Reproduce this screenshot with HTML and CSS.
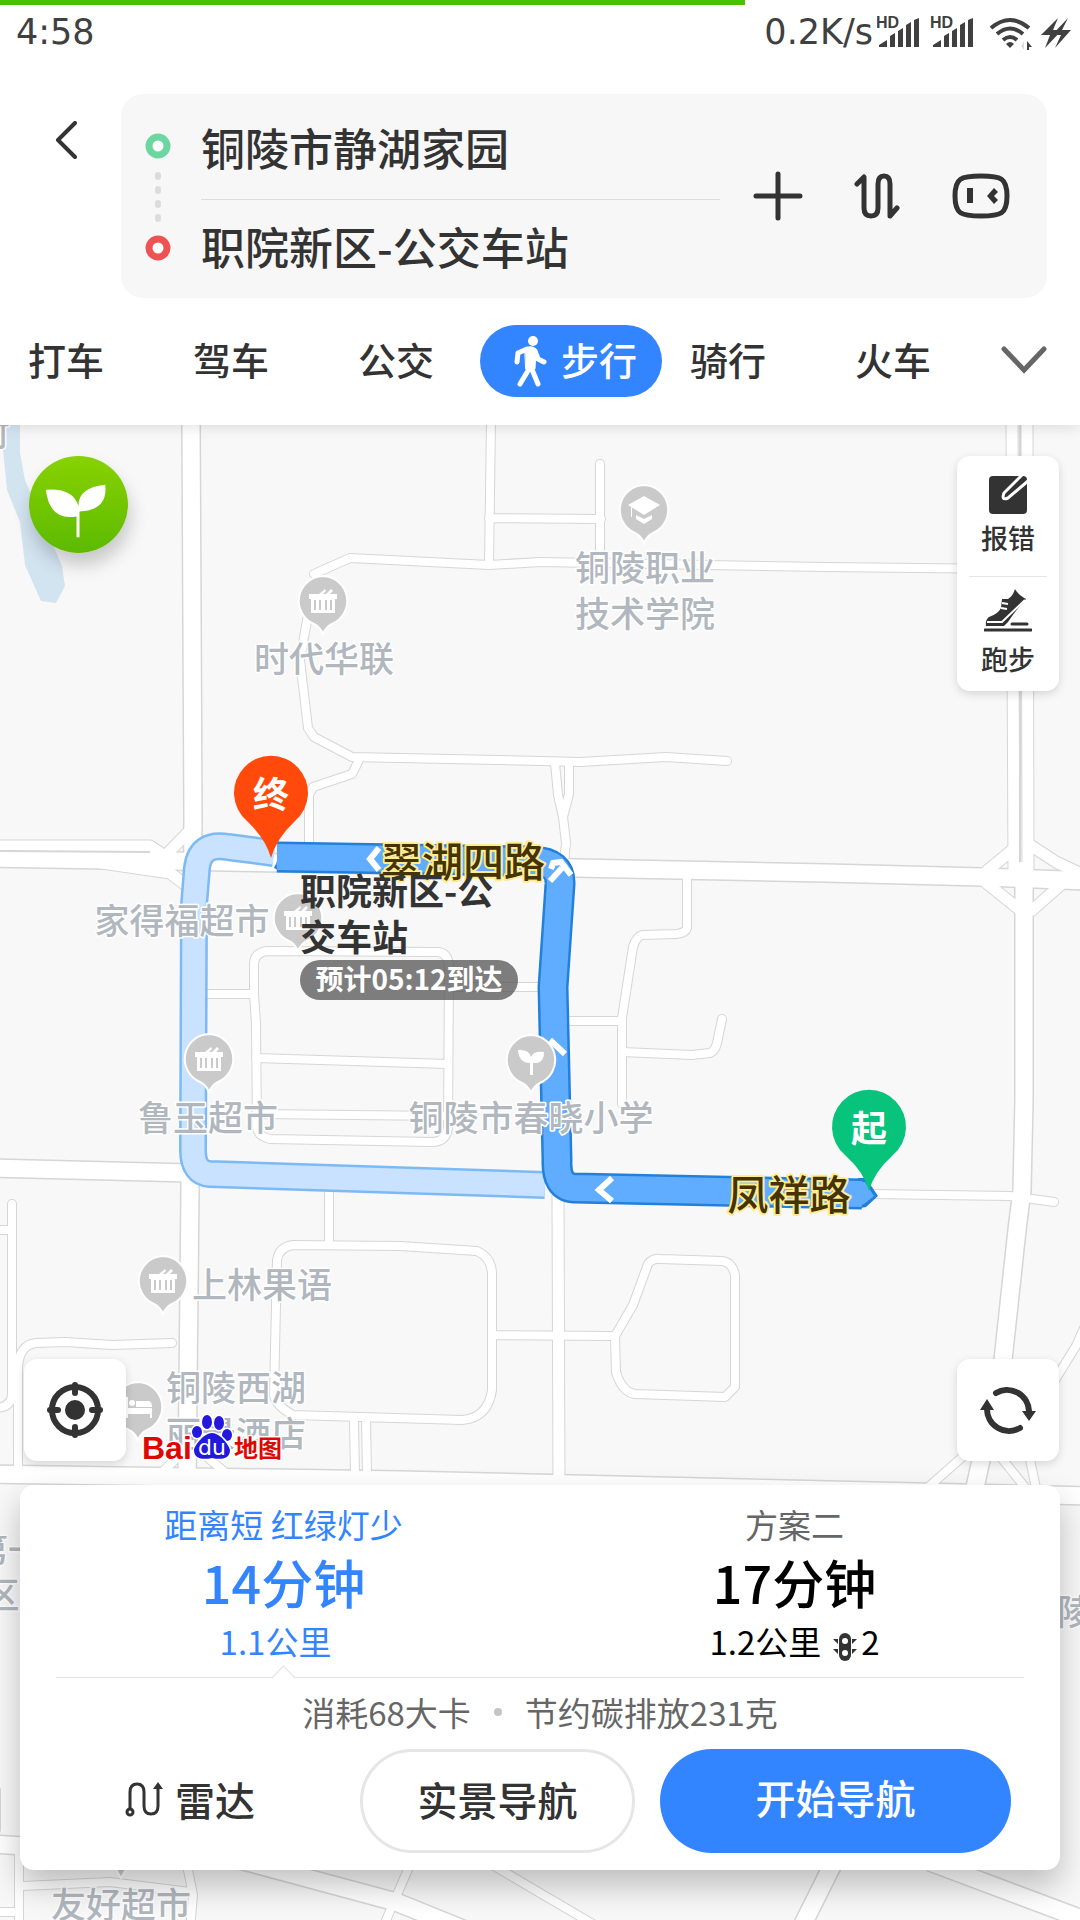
FILE: index.html
```html
<!DOCTYPE html>
<html lang="zh-CN">
<head>
<meta charset="utf-8">
<meta name="viewport" content="width=device-width, initial-scale=1">
<title>步行路线</title>
<link rel="stylesheet" href="styles.css">
</head>
<body>
<header class="header">
  <div class="load-bar"></div>
  <div class="status">
    <span>4:58</span>
    <span class="status-right">
      <span>0.2K/s</span>
      <svg class="status-icons" viewBox="877 14 195 36" aria-hidden="true">
        <g id="signal">
          <text class="hd" x="876" y="28">HD</text>
          <path d="M879 47v-2l8-5v7zM890 47V36l5-3v14zM898 47V31l5-3v19zM906 47V25l5-3v25zM914 47V20l5-2v29z"/>
        </g>
        <use href="#signal" x="54"/>
        <g class="wifi"><path d="M991 28Q1010 12 1029 28M997 34Q1010 23 1023 34M1003 40Q1010 34 1017 40"/></g>
        <path d="M1006 44q4-4 8 0l-4 4z"/><path d="M1027 41l5 6h-3v3h-2z"/><path class="pale" d="M1024 41v9l-3-4z"/>
        <path d="M1058 18l-17 17h9l-5 13 17-18h-9zM1068 18l-16 17h9l-6 13 16-18h-9z"/>
      </svg>
    </span>
  </div>
  <div class="route-form">
    <button class="back" aria-label="返回">
      <svg width="22" height="38" viewBox="0 0 22 38"><path d="M20 2L3 19l17 17"/></svg>
    </button>
    <form class="search">
      <svg class="stops" width="26" height="130" viewBox="0 0 26 130" aria-hidden="true">
        <circle class="from" cx="13" cy="15" r="9"/><circle class="to" cx="13" cy="117" r="9"/>
        <g class="dots"><rect x="10" y="41" width="6" height="8" rx="3"/><rect x="10" y="55" width="6" height="8" rx="3"/><rect x="10" y="69" width="6" height="8" rx="3"/><rect x="10" y="83" width="6" height="8" rx="3"/></g>
      </svg>
      <div class="fields">
        <input aria-label="起点" value="铜陵市静湖家园">
        <input aria-label="终点" value="职院新区-公交车站">
      </div>
      <div class="form-actions">
        <button type="button" aria-label="添加途经点"><svg width="50" height="50" viewBox="0 0 50 50"><path d="M25 3v44M3 25h44"/></svg></button>
        <button type="button" aria-label="交换起终点"><svg width="46" height="48" viewBox="0 0 46 48"><path d="M3 12l7-7v31q0 8 7 8t7-8V12q0-8 6-8t6 8v32l7-8"/></svg></button>
        <button type="button" aria-label="语音助手"><svg width="60" height="48" viewBox="0 0 60 48"><path d="M30 4c20 0 26 2 26 20s-6 20-26 20S4 42 4 24 10 4 30 4z"/><path class="solid" d="M16 16h6v15h-6zM36 24l7-8 4 4-4 4 4 4-4 4z"/></svg></button>
      </div>
    </form>
  </div>
  <nav class="tabs">
    <button>打车</button>
    <button>驾车</button>
    <button>公交</button>
    <button class="active"><svg width="34" height="52" viewBox="0 0 34 52"><circle cx="20" cy="6" r="5"/><path d="M4 27l1-9 9-4M22 16l3 8 6 3M16 34l-9 15M18 32l7 17"/><path class="body" d="M12 13q7-3 11 1l-1 20h-9z"/></svg><span>步行</span></button>
    <button>骑行</button>
    <button>火车</button>
    <button aria-label="更多"><svg class="more" width="46" height="28" viewBox="0 0 46 28"><path d="M3 3l20 21L43 3"/></svg></button>
  </nav>
</header>

<main class="map">
  <svg class="map-canvas" viewBox="0 425 1080 1495" preserveAspectRatio="xMidYMin slice">
    <defs>
      <g id="wide">
        <path d="M191 420L193 820L190 1190L187 1484"/>
        <path d="M-10 858L170 861L575 868L826 873L982 877L1090 881"/>
        <path d="M1024 862L1024 1100L1022 1190L1017 1230L1003 1360L974 1492"/>
        <path d="M-10 1168L190 1173L330 1176"/>
        <path d="M-10 1474L400 1480L1090 1496"/>
        <path d="M-10 1844L24 1846M240 1860L396 1902L480 1936M835 1860L800 1930M930 1862L1090 1922"/>
      </g>
      <g id="twin"><path d="M1012 420L1014 870M1027 420L1028 870M558 1195L559 1484M-10 846L150 846L165 856L198 822M95 862L170 873L195 892M982 875L1016 847M1030 845L1056 862L1090 878M984 881L1020 910M1030 912L1064 882"/></g>
      <g id="minor">
        <path d="M491 420L489 565M489 518L601 519M600 464V563"/>
        <path d="M314 574L350 558L489 565L540 562L826 567L1010 569"/>
        <path d="M308 615L300 660L308 728L314 737L352 757L540 761L580 762L666 757L727 761"/>
        <path d="M360 758L352 774L313 787L309 795V860"/>
        <path d="M555 763L558 795L563 817L566 843L564 862M569 763V794L563 817"/>
        <path d="M687 873V928Q686 933 676 934L642 935Q636 937 633 947L622 1018V1104"/>
        <path d="M560 1021H622M622 1052L692 1055L710 1053Q715 1051 717 1043L722 1019"/>
        <path d="M204 994H254L254 963Q255 952 268 951L438 952Q448 953 449 966L448 1128Q446 1142 432 1142L270 1139Q258 1136 257 1128L256 1023L254 994M256 1058L448 1064M256 1114L448 1116M448 987H550"/>
        <path d="M870 1194L1010 1196L1054 1202M329 1180V1245"/>
        <path d="M293 1245L400 1246L477 1251Q491 1257 492 1273V1390Q488 1418 462 1420L293 1415Q276 1406 274 1395L277 1260Q279 1247 293 1245ZM492 1335L613 1336M354 1420L355 1474M366 1420L367 1474"/>
        <path d="M615 1336L633 1305L648 1264Q653 1258 660 1259L722 1261Q732 1262 735 1275V1387L725 1397L635 1394Q622 1392 616 1372Z"/>
        <path d="M12 1204V1395Q11 1408 -6 1408M-6 1230H12M18 1470V1370Q18 1345 36 1343L66 1342L112 1345L172 1343"/>
        <path d="M1090 1315L1076 1346L1055 1380M925 1490L968 1452M995 1450L1024 1486M1028 1450L1036 1488M208 1458L232 1478M160 1474L180 1455M-4 1790V1830"/>
        <path d="M19 1850V1930M-8 1912H16M22 1886L110 1882L190 1892M186 1860L193 1895L190 1930M412 1860L384 1925M484 1860L620 1940"/>
      </g>
      <path id="alt-route" d="M274 853L228 847Q200 842 197 868L194 905L193 1150Q193 1173 210 1174L545 1185"/>
      <path id="main-route" d="M277 857L533 861Q561 862 560 884L553 987L557 1160Q556 1187 574 1188L862 1194"/>
      <g id="poi">
        <path d="M0-25A25 25 0 0 1 9 23Q3 26 0 33Q-3 26-9 23A25 25 0 0 1 0-25Z"/>
      </g>
      <g id="shop">
        <use href="#poi"/>
        <path class="glyph" d="M-14-7H-4L2-12L3-10L0-7H3L8-12L10-10L7-7H14V-2H12V12H-12V-2H-14Z"/>
        <path class="bars" d="M-8-1V9M-3-1V9M3-1V9M8-1V9"/>
      </g>
    </defs>

    <rect class="land" y="425" width="1080" height="1495"/>
    <path class="water" d="M0 425H20V453L25 480L62 566L65 586L56 603L41 601L25 565L20 522L7 490L3 450L0 430Z"/>
    <g class="casing"><use class="w20" href="#wide"/><use class="w13" href="#twin"/><use class="w10" href="#minor"/></g>
    <g class="surface"><use class="w17" href="#wide"/><use class="w11" href="#twin"/><use class="w8" href="#minor"/></g>
    <path class="median" d="M0 851L150 852M1020 425V862"/>

    <use class="alt edge" href="#alt-route"/><use class="alt" href="#alt-route"/>
    <g class="main-edge"><use href="#main-route"/><path d="M274 868L287 841V872H282ZM858 1178L866 1178L878 1196L866 1207L856 1209Z"/></g>
    <use class="main" href="#main-route"/>
    <path class="main-tip" d="M276 864L286 845V869H280ZM858 1182H865L874 1196L864 1204L858 1206Z"/>
    <path class="arrow" d="M379 848L370 859L379 870M612 1178L599 1190L612 1201M551 869L553 863L561 862L571 875M550 881L562 868M550 1040L565 1054"/>

    <g class="pois">
      <use href="#shop" x="323" y="601"/><use href="#shop" x="298" y="918"/><use href="#shop" x="209" y="1059"/><use href="#shop" x="163" y="1281"/>
      <g transform="translate(644 510)"><use href="#poi"/><path class="glyph" d="M0-14L16-5L0 5L-16-5ZM-8 5L0 9L8 5V9L0 14L-8 9ZM-13-3V7H-12V-3Z"/></g>
      <g transform="translate(531 1060)"><use href="#poi"/><path class="glyph" d="M-13-10Q-2-11 0-3Q2-9 13-8Q13 4 2 3V15H-1V3Q-12 3-13-10Z"/></g>
      <g transform="translate(138 1407)"><use href="#poi"/><path class="glyph" d="M-12-10H-10V1H14V11H12V7H-10V11H-12ZM-2-6H11Q14-5 14 0H-2Z"/><circle class="glyph" cx="-6" cy="-4" r="3"/></g>
      <path d="M115 1868H127L121 1878Z"/>
    </g>
    <g class="place">
      <text x="-8" y="446">村</text>
      <text x="324" y="672">时代华联</text>
      <text x="645" y="581">铜陵职业</text><text x="645" y="627">技术学院</text>
      <text x="182" y="934">家得福超市</text>
      <text x="208" y="1131">鲁玉超市</text>
      <text x="531" y="1131">铜陵市春晓小学</text>
      <text x="262" y="1298">上林果语</text>
      <text x="236" y="1401">铜陵西湖</text><text x="236" y="1447">丽景酒店</text>
      <text x="121" y="1918">友好超市</text>
      <text x="8" y="1563">第一</text><text x="2" y="1608">区</text>
      <text x="1075" y="1625">陵</text>
    </g>
    <g class="street"><text x="463" y="877">翠湖四路</text><text x="789" y="1210">凤祥路</text></g>

    <g class="pin end"><path d="M271 858Q266 839 247 821A37 37 0 1 1 295 821Q276 839 271 858Z"/><text x="271" y="808">终</text></g>
    <g class="pin start"><path d="M869 1191Q864 1172 845 1155A37 37 0 1 1 893 1155Q874 1172 869 1191Z"/><text x="869" y="1142">起</text></g>
    <g class="dest"><text x="300" y="905">职院新区-公</text><text x="300" y="951">交车站</text></g>
    <g class="eta"><rect x="300" y="960" width="218" height="40" rx="20"/><text x="409" y="990">预计05:12到达</text></g>

    <g class="logo">
      <text class="latin" x="142" y="1459">Bai</text>
      <g class="paw"><ellipse cx="207" cy="1422" rx="5" ry="7"/><ellipse cx="219" cy="1423" rx="5" ry="7"/><ellipse cx="197" cy="1432" rx="5" ry="6"/><ellipse cx="227" cy="1435" rx="5" ry="6"/><path d="M212 1433C220 1433 229 1445 230 1450C230 1459 221 1460 212 1458C203 1460 194 1459 194 1450C195 1445 204 1433 212 1433Z"/></g>
      <text class="du" x="212" y="1455">du</text>
      <text class="cjk" x="234" y="1457">地图</text>
    </g>
  </svg>

  <div class="overlay">
    <div class="map-row">
      <button class="leaf" aria-label="绿色出行"><svg width="99" height="97" viewBox="0 0 98 98"><path d="M16 34Q44 32 49 51Q48 32 76 29Q79 55 50 56V82H47V61Q20 66 16 34Z"/></svg></button>
      <div class="tools">
        <button><svg width="40" height="40" viewBox="0 0 40 40"><rect x="1" y="1" width="38" height="38" rx="4"/><path class="pen" d="M34 0L16 18q-3 8 4 5L40 6"/></svg>报错</button>
        <button><svg width="48" height="44" viewBox="0 0 48 44"><path d="M31 1q4 7 11 10-10 11-18 23l-4 4H2q-1-6 3-9 9-3 12-9l1-9h6q5-3 7-10z"/><path class="lace" d="M3 34h15L41 12M18 15l6 1M17 20l6 1"/><path class="ground" d="M1 42h46M28 36h15"/></svg>跑步</button>
      </div>
    </div>
    <div class="map-row bottom">
      <button class="square" aria-label="定位"><svg width="58" height="58" viewBox="0 0 58 58"><circle cx="29" cy="29" r="23"/><circle class="solid" cx="29" cy="29" r="10"/><path d="M29 4v8M29 46v8M4 29h8M46 29h8"/></svg></button>
      <button class="square" aria-label="刷新"><svg width="58" height="52" viewBox="0 0 58 52"><path d="M17 9A22 22 0 0 1 50 27M41 44A22 22 0 0 1 8 24"/><path class="solid" d="M43 27h14l-7 10zM1 26h14L8 15z"/></svg></button>
    </div>
    <section class="card">
      <div class="options">
        <button class="option selected"><span class="tag">距离短 红绿灯少</span><strong>14分钟</strong><span class="distance">1.1公里</span></button>
        <button class="option"><span class="tag">方案二</span><strong>17分钟</strong><span class="distance">1.2公里 <svg width="24" height="28" viewBox="0 0 24 28"><path d="M0 6h5v5zM0 16h5v5zM24 6h-5v5zM24 16h-5v5z"/><rect x="6" y="0" width="12" height="28" rx="6"/><circle cx="12" cy="8" r="3"/><circle cx="12" cy="20" r="3"/></svg>2</span></button>
      </div>
      <p class="stats"><span>消耗68大卡</span><i></i><span>节约碳排放231克</span></p>
      <div class="actions">
        <button class="radar"><svg width="38" height="36" viewBox="0 0 38 36"><path d="M5 28V11q0-8 7-8t7 8v14q0 8 7 8t7-8V7"/><circle cx="5" cy="31" r="3"/><path class="solid" d="M33 1l5 7H28z"/></svg>雷达</button>
        <button class="outline">实景导航</button>
        <button class="primary">开始导航</button>
      </div>
    </section>
  </div>
</main>
</body>
</html>
```
FILE: styles.css
```css
* { box-sizing: border-box; }
body {
  margin: 0;
  min-height: 100vh;
  display: flex;
  flex-direction: column;
  background: #fff;
  color: #333;
  font-family: "Noto Sans CJK SC", sans-serif;
}
button, input {
  margin: 0;
  padding: 0;
  border: 0;
  background: none;
  color: inherit;
  font: inherit;
}
svg { display: block; }

/* header */
.header {
  position: relative;
  z-index: 1;
  background: #fff;
  box-shadow: 0 2px 14px rgba(0, 0, 0, .12);
}
.load-bar { width: 69%; height: 5px; background: #48c200; }
.status {
  display: flex;
  justify-content: space-between;
  align-items: center;
  height: 54px;
  padding: 0 8px 0 16px;
  color: #404040;
  font-family: "DejaVu Sans", sans-serif;
  font-size: 35px;
}
.status-right { display: flex; align-items: center; gap: 4px; }
.status-icons { width: 195px; height: 36px; fill: #404040; }
.hd { font: bold 16px "Liberation Sans", sans-serif; }
.wifi { fill: none; stroke: #404040; stroke-width: 4; }
.pale { fill: #ddd; }

.route-form { display: flex; align-items: flex-start; padding: 35px 33px 0 0; }
.back { width: 121px; height: 92px; padding: 0 0 0 55px; }
.back path { fill: none; stroke: #333; stroke-width: 4; stroke-linecap: round; stroke-linejoin: round; }
.search {
  flex: 1;
  display: flex;
  align-items: center;
  height: 204px;
  padding: 0 36px 0 24px;
  border-radius: 22px;
  background: #f7f7f7;
}
.stops circle { fill: #fff; stroke-width: 7; }
.stops .from { stroke: #6bd6a0; }
.stops .to { stroke: #ee5253; }
.stops .dots { fill: #dcdcdc; }
.fields { flex: 1; min-width: 0; margin-left: 30px; }
.fields input { display: block; width: 100%; height: 98px; padding-bottom: 6px; font-size: 44px; font-weight: 500; }
.fields input:first-child { height: 106px; padding-bottom: 0; border-bottom: 1px solid #dcdcdc; }
.form-actions { display: flex; align-items: center; gap: 51px; margin-left: 33px; }
.form-actions path { fill: none; stroke: #333; stroke-width: 5; stroke-linecap: round; stroke-linejoin: round; }
.form-actions .solid { fill: #333; stroke: none; }

.tabs {
  display: grid;
  grid-template-columns: 165fr 165fr 150fr 182fr 165fr 146fr 107fr;
  padding: 27px 0 28px;
  font-size: 38px;
  font-weight: 500;
}
.tabs button { height: 72px; padding: 0 0 6px 28px; text-align: left; }
.tabs .active {
  display: flex;
  align-items: center;
  justify-content: center;
  gap: 14px;
  padding: 0 0 0 8px;
  border-radius: 36px;
  background: #3385ff;
  color: #fff;
}
.active span { padding-bottom: 6px; }
.active svg { fill: #fff; stroke: #fff; stroke-linecap: round; stroke-linejoin: round; }
.active path { fill: none; stroke-width: 5; }
.active .body { fill: #fff; stroke-width: 1; }
.active circle { stroke: none; }
.tabs .more { margin-top: 4px; fill: none; stroke: #666; stroke-width: 5; stroke-linecap: round; }

/* map drawing */
.map { position: relative; flex: 1; display: flex; overflow: hidden; }
.map-canvas { position: absolute; inset: 0; width: 100%; height: 100%; }
.land { fill: #f8f8f8; }
.water { fill: #d3e4f1; }
.casing, .surface, .alt, .main, .main-edge { fill: none; stroke-linejoin: round; }
.casing { stroke: #d6d6d6; }
.surface { stroke: #fff; }
.w20 { stroke-width: 20px; }
.w17 { stroke-width: 17px; }
.w13 { stroke-width: 13px; }
.w11 { stroke-width: 11px; }
.w10 { stroke-width: 10px; stroke-linecap: round; }
.w8 { stroke-width: 8px; stroke-linecap: round; }
.median { fill: none; stroke: #d6d6d6; stroke-width: 2; }
.alt { stroke: #c8e2ff; stroke-width: 23px; }
.alt.edge { stroke: #7cbaf5; stroke-width: 28px; }
.main-edge use { stroke: #2280da; stroke-width: 31px; }
.main-edge path { fill: #2280da; }
.main-edge use, .main { fill: none; }
.main { stroke: #60adff; stroke-width: 26px; }
.main-tip { fill: #60adff; }
.arrow { fill: none; stroke: #fff; stroke-width: 6; }
.pois { fill: #cacaca; stroke: #fff; stroke-width: 2; }
.glyph { fill: #fff; stroke: none; }
.bars { fill: none; stroke: #cacaca; stroke-width: 2; }
.place {
  fill: #b1b7be;
  stroke: #fff;
  stroke-width: 3;
  stroke-linejoin: round;
  paint-order: stroke;
  font-size: 35px;
  font-weight: 500;
  text-anchor: middle;
}
.street {
  fill: #463400;
  stroke: #ffeb92;
  stroke-width: 4;
  stroke-linejoin: round;
  paint-order: stroke;
  font-size: 41px;
  font-weight: 500;
  text-anchor: middle;
}
.pin text { fill: #fff; font-size: 36px; font-weight: 700; text-anchor: middle; }
.end { fill: #ff4a0b; }
.start { fill: #08c37c; }
.dest { font-size: 36px; font-weight: 700; fill: #333; }
.eta rect { fill: #555; opacity: .76; }
.eta text { fill: #fff; font-size: 28px; font-weight: 700; text-anchor: middle; }
.logo { stroke: #fff; stroke-width: 3; stroke-linejoin: round; paint-order: stroke; fill: #df0703; }
.logo .latin { font: bold 32px "Liberation Sans", sans-serif; }
.logo .cjk { font-size: 24px; font-weight: 700; }
.logo .paw { fill: #2319dc; }
.logo .du { fill: #fff; stroke: none; font: 22px "DejaVu Sans", sans-serif; text-anchor: middle; }

/* controls over the map */
.overlay { position: relative; flex: 1; display: flex; flex-direction: column; padding: 31px 20px 50px; }
.map-row { display: flex; justify-content: space-between; align-items: flex-start; padding: 0 1px 0 9px; }
.map-row.bottom { margin-top: auto; padding-left: 4px; }
.leaf {
  border-radius: 50%;
  background: linear-gradient(#88d200, #5cba00);
  box-shadow: 2px 12px 18px rgba(0, 0, 0, .2);
}
.leaf path { fill: #fff; }
.tools, .square { width: 102px; border-radius: 13px; background: #fff; box-shadow: 0 3px 10px rgba(0, 0, 0, .14); }
.tools { height: 235px; padding: 0 12px; }
.tools button {
  display: flex;
  flex-direction: column;
  align-items: center;
  justify-content: flex-end;
  gap: 3px;
  width: 100%;
  height: 120px;
  padding-bottom: 18px;
  font-size: 27px;
  line-height: 40px;
  font-weight: 500;
}
.tools button + button { gap: 7px; height: 115px; padding-bottom: 12px; border-top: 1px solid #e6e6e6; }
.tools svg { fill: #333; }
.tools .pen { fill: none; stroke: #fff; stroke-width: 3; }
.tools .lace { fill: none; stroke: #fff; stroke-width: 2; }
.tools .ground { stroke: #333; stroke-width: 3; stroke-linecap: round; }
.square { display: flex; align-items: center; justify-content: center; height: 102px; }
.square svg { fill: none; stroke: #333; stroke-width: 6; stroke-linecap: round; }
.square .solid { fill: #333; stroke: none; }

/* route card */
.card {
  margin-top: 24px;
  padding-bottom: 17px;
  border-radius: 14px;
  background: #fff;
  box-shadow: 0 16px 32px rgba(0, 0, 0, .24);
}
.options { position: relative; display: grid; grid-template-columns: 1fr 1fr; padding: 17px 10px 14px 8px; }
.options::after { content: ""; position: absolute; left: 36px; right: 36px; bottom: 0; border-bottom: 1px solid #e2e2e2; }
.option { position: relative; display: flex; flex-direction: column; align-items: center; color: #000; }
.tag { color: #666; font-size: 33px; line-height: 44px; }
.option strong { font-size: 52px; line-height: 72px; font-weight: 500; }
.distance { display: flex; align-items: center; gap: 12px; font-size: 33px; line-height: 46px; }
.distance svg { margin-top: 12px; margin-right: -8px; fill: #333; }
.distance circle { fill: #fff; }
.selected, .selected .tag { color: #3385ff; }
.selected .distance { padding-right: 16px; }
.selected::after {
  content: "";
  position: absolute;
  z-index: 1;
  bottom: -22px;
  width: 16px;
  height: 16px;
  border: solid #e2e2e2;
  border-width: 1px 0 0 1px;
  background: linear-gradient(135deg, #fff 50%, transparent 50%);
  transform: rotate(45deg);
}
.stats {
  display: flex;
  justify-content: center;
  align-items: center;
  gap: 23px;
  margin: 12px 0 15px;
  color: #666;
  font-size: 33px;
  line-height: 44px;
}
.stats i { width: 8px; height: 8px; border-radius: 50%; background: #c4c4c4; }
.actions {
  display: grid;
  grid-template-columns: 340fr 275fr 376fr;
  padding-right: 49px;
  font-size: 40px;
  font-weight: 500;
}
.actions button { height: 104px; padding-bottom: 4px; border-radius: 52px; }
.radar { display: flex; align-items: center; justify-content: center; gap: 12px; }
.radar svg { fill: none; stroke: #333; stroke-width: 3; }
.radar .solid { fill: #333; stroke: none; }
.actions .outline { border: 3px solid #e6e6e6; }
.actions .primary { margin-left: 25px; padding-bottom: 8px; background: #3385ff; color: #fff; }
```
